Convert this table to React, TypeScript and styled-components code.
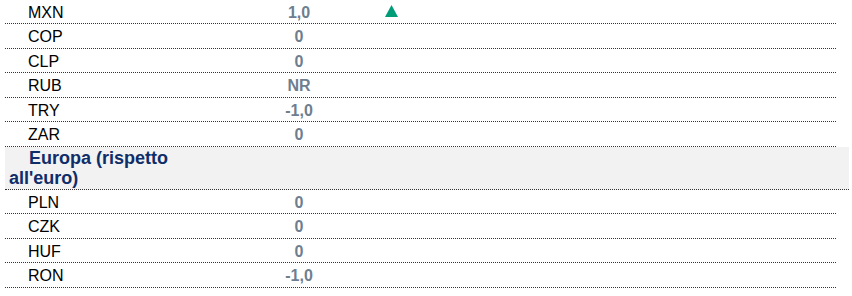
import React from "react";
import styled, { createGlobalStyle } from "styled-components";

const colors = {
  label: "#000000",
  value: "#6e7e8f",
  section: "#0f2d69",
  sectionBg: "#f2f2f2",
  rule: "#333333",
  up: "#009b77",
};

const GlobalStyle = createGlobalStyle`
  html, body {
    margin: 0;
    padding: 0;
    background: #ffffff;
  }
  body {
    font-family: "Liberation Sans", Arial, sans-serif;
  }
`;

const Table = styled.div`
  display: flex;
  flex-direction: column;
  padding-left: 5px;
`;

const Row = styled.div`
  display: grid;
  grid-template-columns: 210px 168px 17px 1fr;
  align-items: start;
  width: 831px;
  height: 24.45px;
  box-sizing: border-box;
  padding-top: 4px;
  border-bottom: 1px dotted ${colors.rule};
  font-size: 16px;
`;

const Label = styled.div`
  padding-left: 23px;
  color: ${colors.label};
`;

const Value = styled.div`
  text-align: center;
  font-weight: bold;
  color: ${colors.value};
`;

const Trend = styled.div`
  padding-left: 2px;
  padding-top: 1px;
  line-height: 0;
`;

const SectionRow = styled.div`
  width: 844px;
  height: 43.3px;
  box-sizing: border-box;
  padding-top: 1px;
  background: ${colors.sectionBg};
  border-bottom: 1px dotted ${colors.rule};
`;

const SectionTitle = styled.div`
  width: 206px;
  padding-left: 4px;
  text-indent: 20px;
  font-size: 18px;
  line-height: 20px;
  font-weight: bold;
  color: ${colors.section};
`;

const UpArrow = () => (
  <svg width="13" height="12" viewBox="0 0 13 12">
    <polygon points="6.5,0 13,12 0,12" fill={colors.up} />
  </svg>
);

type Item = { code: string; value: string; up?: boolean };

const emerging: Item[] = [
  { code: "MXN", value: "1,0", up: true },
  { code: "COP", value: "0" },
  { code: "CLP", value: "0" },
  { code: "RUB", value: "NR" },
  { code: "TRY", value: "-1,0" },
  { code: "ZAR", value: "0" },
];

const europe: Item[] = [
  { code: "PLN", value: "0" },
  { code: "CZK", value: "0" },
  { code: "HUF", value: "0" },
  { code: "RON", value: "-1,0" },
];

const CurrencyRow = ({ item }: { item: Item }) => (
  <Row>
    <Label>{item.code}</Label>
    <Value>{item.value}</Value>
    <Trend>{item.up && <UpArrow />}</Trend>
  </Row>
);

export default function App() {
  return (
    <>
      <GlobalStyle />
      <Table>
        {emerging.map((item) => (
          <CurrencyRow key={item.code} item={item} />
        ))}
        <SectionRow>
          <SectionTitle>Europa (rispetto all'euro)</SectionTitle>
        </SectionRow>
        {europe.map((item) => (
          <CurrencyRow key={item.code} item={item} />
        ))}
      </Table>
    </>
  );
}
